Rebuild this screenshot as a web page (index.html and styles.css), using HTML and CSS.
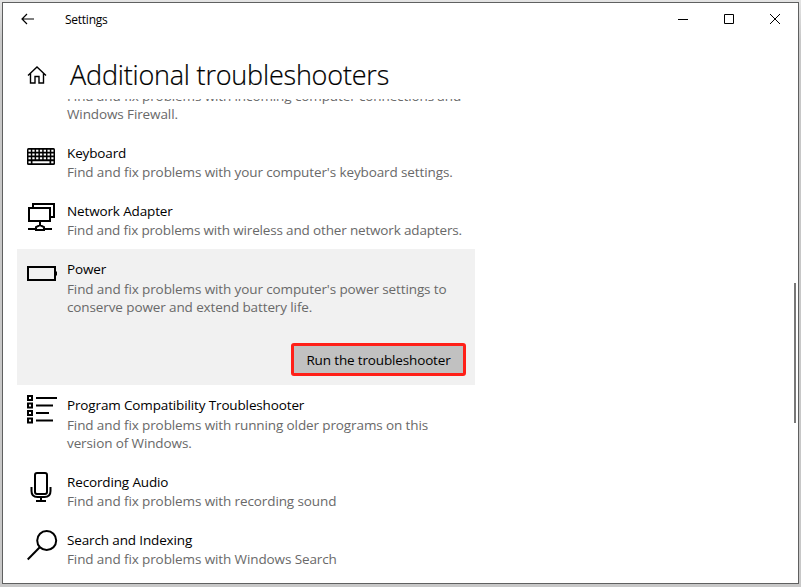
FILE: index.html
```html
<!DOCTYPE html>
<html lang="en">
  <head>
    <meta charset="UTF-8" />
    <title>Settings</title>
    <link rel="stylesheet" href="styles.css">
  </head>
  <body>
    <div class="window">
      <header class="titlebar">
        <svg class="back" width="14" height="12" viewBox="0 0 14 12"><path d="M13 6H1M6 1L1 6l5 5" /></svg>
        <span class="app-name">Settings</span>
        <svg class="controls" width="103" height="12" viewBox="0 0 103 12">
          <path d="M0 6.5h10" />
          <path d="M46.5 1.5h9v9h-9z" />
          <path d="M92 1l10 10M102 1L92 11" />
        </svg>
      </header>

      <div class="heading">
        <svg class="home" width="20" height="18" viewBox="0 0 20 18"><path d="M1 9.5L10 1l9 8.5M3.5 7.5V17H8v-6.500h4V17h4.500V7.500" /></svg>
        <h1>Additional troubleshooters</h1>
      </div>

      <main class="list">
        <section class="item first">
          <div class="text">
            <p>Find and fix problems with incoming computer connections and<br />Windows Firewall.</p>
          </div>
        </section>

        <section class="item">
          <svg class="icon" width="32" height="34" viewBox="0 0 32 34">
            <rect class="solid" x="0" y="6" width="28" height="17" rx="1.5" />
            <path class="keys" d="M1.500 8.700h25M1.500 12.500h25M1.500 16.300h25" />
            <path class="space" d="M1.500 20.200h2.300M5.500 20.200h17M24.200 20.200h2.300" />
          </svg>
          <div class="text">
            <h2>Keyboard</h2>
            <p>Find and fix problems with your computer's keyboard settings.</p>
          </div>
        </section>

        <section class="item">
          <svg class="icon" width="32" height="34" viewBox="0 0 32 34">
            <path d="M6 8V4h21v13h-4" />
            <path d="M2 8h21v13H2z" />
            <path d="M13 21v4M1 29h8M17 29h8M9 30v-3l4-2 4 2v3z" />
          </svg>
          <div class="text">
            <h2>Network Adapter</h2>
            <p class="tight">Find and fix problems with wireless and other network adapters.</p>
          </div>
        </section>

        <section class="item selected">
          <svg class="icon" width="32" height="34" viewBox="0 0 32 34">
            <path d="M1 9h27v13H1z" />
            <path d="M29 13.500v4" />
          </svg>
          <div class="text">
            <h2>Power</h2>
            <p class="long">Find and fix problems with your computer's power settings to<br />conserve power and extend battery life.</p>
          </div>
          <button type="button">Run the troubleshooter</button>
        </section>

        <section class="item">
          <svg class="icon" width="32" height="34" viewBox="0 0 32 34">
            <path d="M1 2h4v4H1zM1 9.500h4v4H1zM1 17h4v4H1zM1 24.500h4v4H1z" />
            <path d="M9 4h21M9 11.500h17M9 19h13M9 26.500h17" />
          </svg>
          <div class="text">
            <h2>Program Compatibility Troubleshooter</h2>
            <p class="long">Find and fix problems with running older programs on this<br />version of Windows.</p>
          </div>
        </section>

        <section class="item">
          <svg class="icon" width="32" height="34" viewBox="0 0 32 34">
            <rect x="8" y="2" width="12" height="21" rx="2" />
            <path d="M4.500 16v4q0 6 6 6h7q6 0 6-6v-4M14 26v4M9 30h10" />
          </svg>
          <div class="text">
            <h2>Recording Audio</h2>
            <p>Find and fix problems with recording sound</p>
          </div>
        </section>

        <section class="item">
          <svg class="icon" width="32" height="34" viewBox="0 0 32 34">
            <circle cx="19.700" cy="11.500" r="9.500" />
            <path d="M13 18L.7 30.500" />
          </svg>
          <div class="text">
            <h2>Search and Indexing</h2>
            <p>Find and fix problems with Windows Search</p>
          </div>
        </section>
      </main>
      <div class="scrollbar"></div>
    </div>
  </body>
</html>
```
FILE: styles.css
```css
body {
  margin: 0;
  height: 587px;
  box-sizing: border-box;
  padding: 2px;
  overflow: hidden;
  background: linear-gradient(#e4e4e4, #c8c8c8 40px);
  font-family: "Open Sans", "Noto Sans", sans-serif;
  color: #000;
}
.window {
  position: relative;
  width: 797px;
  height: 582px;
  box-sizing: border-box;
  border: 1px solid #5f6060;
  background: #fff;
  display: flex;
  flex-direction: column;
}
svg {
  fill: none;
  stroke: #000;
  flex: none;
}
.titlebar {
  height: 33px;
  display: flex;
  align-items: center;
  padding: 0 17px 0 18px;
}
.back {
  stroke-width: 1.2;
  margin-top: -2px;
}
.app-name {
  margin-left: 30px;
  font-size: 12px;
  letter-spacing: -0.25px;
}
.controls {
  margin: -1px 0 0 auto;
}
.heading {
  height: 63px;
  flex: none;
  display: flex;
  padding: 19px 0 0 24px;
  box-sizing: border-box;
}
.home {
  margin-top: 11px;
  stroke-width: 1.4;
}
h1 {
  margin: 0 0 0 23px;
  font-size: 27px;
  line-height: 40px;
  font-weight: 300;
  letter-spacing: -0.2px;
  white-space: nowrap;
  -webkit-text-stroke: 0.2px #000;
}
.list {
  flex: 1;
  min-height: 0;
  overflow: hidden;
  padding-left: 14px;
}
.item {
  width: 458px;
  box-sizing: border-box;
  display: grid;
  grid-template-columns: 40px 1fr;
  padding: 10px 9px 10px 10px;
}
.first {
  margin-top: -12px;
  padding: 0 0 10px 50px;
}
.icon {
  stroke-width: 2;
  margin: -1px 0 -10px;
}
.icon .solid {
  fill: #000;
  stroke: none;
}
.icon .keys {
  stroke: #fff;
  stroke-dasharray: 2.3 1.5;
}
.icon .space {
  stroke: #fff;
}
.text {
  white-space: nowrap;
}
h2 {
  margin: 0;
  font-size: 13.5px;
  line-height: 20px;
  font-weight: 400;
  letter-spacing: -0.14px;
}
p {
  margin: 0;
  font-size: 13.5px;
  line-height: 18px;
  letter-spacing: -0.11px;
  color: #696969;
}
.tight {
  letter-spacing: -0.16px;
}
.long {
  padding-top: 1px;
}
.selected {
  height: 136px;
  background: #f1f1f1;
  padding-bottom: 9px;
}
button {
  grid-column: 2;
  align-self: end;
  justify-self: end;
  width: 175px;
  height: 33px;
  padding: 0;
  border: 3px solid #ff2018;
  border-radius: 3px;
  background: #c1c1c1;
  font: 13.5px "Open Sans", sans-serif;
  letter-spacing: -0.15px;
  color: #000;
  white-space: nowrap;
}
.scrollbar {
  position: absolute;
  right: 2px;
  top: 280px;
  width: 2px;
  height: 140px;
  background: #787878;
}
```
